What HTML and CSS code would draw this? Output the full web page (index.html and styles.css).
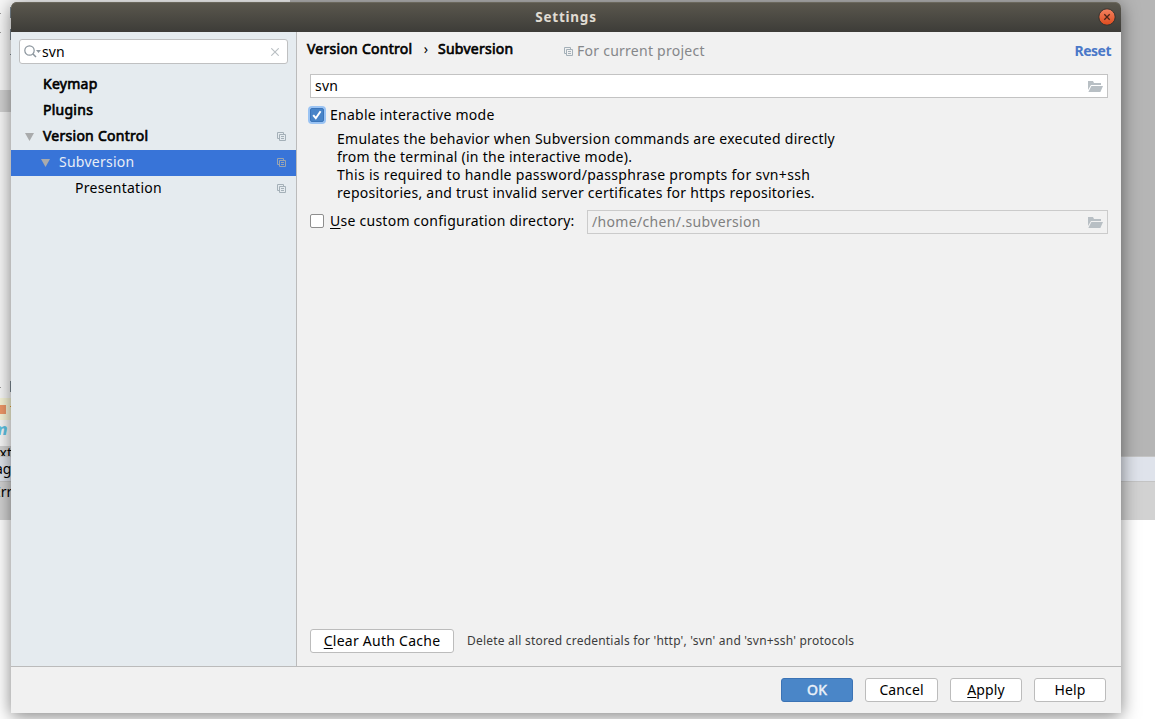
FILE: index.html
```
<!DOCTYPE html>
<html lang="en">
<head>
<meta charset="utf-8">
<title>Settings</title>
<link rel="stylesheet" href="styles.css">
</head>
<body>
<svg class="symbols" width="0" height="0">
  <symbol id="copy" viewBox="0 0 9 9"><path d="M2.5 6.5h-2v-6h6v2M2.5 2.5h6v6h-6zM4 4.5h3M4 6.5h3" fill="none" stroke="currentColor"/></symbol>
  <symbol id="folder" viewBox="0 0 15 11"><path d="M0 0h5l1 2h7v2H3L0 9z" fill="currentColor"/><path d="M3.4 5H15l-2.600 6H.4z" fill="currentColor"/></symbol>
  <symbol id="arrow" viewBox="0 0 9 8"><path d="M0 0h9L4.500 8z" fill="#a9abac"/></symbol>
</svg>
<div class="backdrop">
  <div class="editor"><div class="paper"></div><div class="gray"></div></div>
  <div class="statusbar"></div>
  <div class="lower"></div>
  <i class="band"></i><i class="highlight"></i><i class="marker"></i><i class="glint"></i>
  <i class="tick t1"></i><i class="tick t2"></i><i class="tick t3"></i><i class="tick t4"></i>
  <i class="dash d1"></i><i class="dash d2"></i><i class="dash d3"></i>
  <span class="frag f1">m</span><i class="tabs"></i><span class="frag f2">ext</span><span class="frag f3">ag</span><span class="frag f4">Err</span>
</div>
<div class="window">
  <header class="titlebar"><span class="title">Settings</span>
    <svg class="close" width="18" height="18" viewBox="0 0 18 18"><defs><linearGradient id="orange" x2="0" y2="1"><stop offset="0" stop-color="#f48361"/><stop offset="1" stop-color="#df4b1d"/></linearGradient></defs><circle cx="9" cy="9" r="8.200" fill="url(#orange)" stroke="#34332f" stroke-width="1"/><path d="M6.300 6.300l5.400 5.400M11.700 6.300l-5.400 5.400" stroke="#4b2519" stroke-width="1.300"/></svg>
  </header>
  <div class="main">
    <aside class="sidebar">
      <div class="search">
        <svg class="lens" width="17" height="14" viewBox="0 0 17 14"><circle cx="5.500" cy="5.500" r="4.700" fill="none" stroke="#8b959d" stroke-width="1.200"/><path d="M9 9l3 3" stroke="#8b959d" stroke-width="1.500"/><path d="M12 5h5l-2.500 3z" fill="#8b959d"/></svg>
        <span class="query">svn</span>
        <svg class="clear" width="8" height="8" viewBox="0 0 8 8"><path d="M.3.3l7.400 7.400M7.700.3L.3 7.700" stroke="#b9bfc3" stroke-width="1.100"/></svg>
      </div>
      <div class="row top"><b>Keymap</b></div>
      <div class="row top"><b>Plugins</b></div>
      <div class="row parent"><svg class="arrow"><use href="#arrow"/></svg><b>Version Control</b><svg class="copy"><use href="#copy"/></svg></div>
      <div class="row child selected"><svg class="arrow"><use href="#arrow"/></svg><span>Subversion</span><svg class="copy"><use href="#copy"/></svg></div>
      <div class="row leaf"><span>Presentation</span><svg class="copy"><use href="#copy"/></svg></div>
    </aside>
    <section class="content">
      <div class="crumbs"><b class="crumb-root">Version Control</b><span class="sep">›</span><b class="crumb-leaf">Subversion</b><span class="scope"><svg class="copy"><use href="#copy"/></svg><span>For current project</span></span><strong class="reset">Reset</strong></div>
      <div class="field"><span class="plain">svn</span><svg class="folder"><use href="#folder"/></svg></div>
      <div class="check interactive"><span class="box checked"><svg width="10" height="10" viewBox="0 0 10 10"><path d="M1.200 5.200l2.600 3L8.600 1.200" fill="none" stroke="#fff" stroke-width="2"/></svg></span><span>Enable interactive mode</span></div>
      <p class="hint">Emulates the behavior when Subversion commands are executed directly<br>from the terminal (in the interactive mode).<br><span class="wide">This is required to handle password/passphrase prompts for svn+ssh</span><br>repositories, and trust invalid server certificates for https repositories.</p>
      <div class="custom"><div class="check"><span class="box"></span><span><u>U</u>se custom configuration directory:</span></div><div class="field disabled"><span class="path">/home/chen/.subversion</span><svg class="folder"><use href="#folder"/></svg></div></div>
      <div class="auth"><button class="btn clear-auth"><u>C</u>lear Auth Cache</button><span class="note">Delete all stored credentials for 'http', 'svn' and 'svn+ssh' protocols</span></div>
    </section>
  </div>
  <footer class="footer"><button class="btn ok">OK</button><button class="btn cancel">Cancel</button><button class="btn apply"><u>A</u>pply</button><button class="btn help">Help</button></footer>
</div>
</body>
</html>
```
FILE: styles.css
```
* { box-sizing: border-box; }
body { margin: 0; width: 1155px; height: 719px; overflow: hidden; position: relative; background: #fff; font: 14px/18px "Noto Sans", sans-serif; letter-spacing: .255px; color: #000; padding: 2px 34px 6px 11px; }
.symbols { position: absolute; }
.backdrop { position: absolute; inset: 0; display: flex; flex-direction: column; overflow: hidden; letter-spacing: 0; }
.editor { height: 456px; display: flex; }
.paper { width: 290px; background: #f8f8f8; }
.gray { flex: 1; background: #b5b5b5; }
.statusbar { height: 26px; background: #dfe3eb; border-top: 1px solid #c4c4c4; border-bottom: 1px solid #c4c4c4; }
.lower { height: 38px; background: #d2d2d2; }
.backdrop i, .frag { position: absolute; }
.band { left: 0; top: 90px; width: 11px; height: 22px; background: #d2d2d2; }
.highlight { left: 0; top: 398px; width: 11px; height: 22px; background: #f8f6d8; }
.marker { left: 0; top: 405px; width: 6px; height: 9px; background: #ef9868; }
.glint { left: 10px; top: 406px; width: 1px; height: 1px; background: #e8a030; }
.tabs { left: 0; top: 446px; width: 11px; height: 11px; background: #d2d2d2; }
.tick { left: 10px; width: 1px; height: 11px; background: #7d8a94; }
.t1 { top: 7px; } .t2 { top: 29px; } .t3 { top: 54px; height: 1px !important; } .t4 { top: 381px; }
.dash { left: 0; width: 1px; height: 1px; background: #999; }
.d1 { top: 13px; } .d2 { top: 32px; } .d3 { top: 387px; }
.f1 { left: -8px; top: 421px; color: #5fc3e4; font: italic bold 15px/18px "DejaVu Sans", sans-serif; }
.f2 { left: -8px; top: 446px; line-height: 14px; height: 10px; overflow: hidden; }
.f3 { left: -5px; top: 462px; line-height: 14px; }
.f4 { left: -7px; top: 485px; line-height: 14px; }
.window { position: relative; width: 1110px; height: 711px; display: flex; flex-direction: column; border-radius: 6px 6px 0 0; background: #f1f1f1; box-shadow: 0 3px 18px rgba(0,0,0,.5); }
.titlebar { height: 30px; flex: none; border-radius: 6px 6px 0 0; background: linear-gradient(#5b584e, #3d3c38); box-shadow: inset 0 1px #6a675c; color: #e0dcd3; display: flex; align-items: center; justify-content: center; position: relative; }
.title { font: bold 13.5px/18px "Noto Sans", sans-serif; letter-spacing: .75px; }
.close { position: absolute; right: 5px; top: 6px; }
.main { flex: 1; display: flex; min-height: 0; }
.sidebar { width: 286px; background: #e5ebef; border-right: 1px solid #bbb; padding-top: 7px; }
.search { margin: 0 8px 8px; height: 25px; border: 1px solid #bfc0c1; border-radius: 3px; background: #fff; display: flex; align-items: center; padding: 0 8px 0 4px; letter-spacing: .1px; }
.query { margin-left: 1px; flex: 1; }
.row { height: 26px; display: flex; align-items: center; padding: 0 10px 2px 32px; }
.row .copy { margin: 1px 0 0 auto; }
.arrow { width: 9px; height: 8px; margin: 2px 9px 0 0; }
.parent { padding-left: 14px; }
.child { padding-left: 30px; }
.leaf { padding-left: 64px; }
.selected { background: #3874d8; color: #e9eef6; }
.copy { width: 9px; height: 9px; color: #a4b0b8; flex: none; }
.selected .copy { color: #9aa5b0; }
b { font-weight: normal; -webkit-text-stroke: .65px currentColor; }
.content { width: 824px; padding: 0 13px; display: flex; flex-direction: column; }
.crumbs { height: 42px; display: flex; margin: 0 -3px; padding-top: 8px; white-space: nowrap; }
.crumb-root { width: 107px; }
.crumb-leaf { width: 76px; }
.sep { width: 24px; text-align: center; }
.scope { display: flex; align-items: center; height: 18px; margin: 2px 0 0 50px; gap: 4px; color: #85878a; }
.scope .copy { margin-top: 1px; }
.reset { margin: 2px 0 0 auto; color: #4a78c8; letter-spacing: -.5px; }
.field { height: 24px; border: 1px solid #c3c3c3; background: #fff; display: flex; align-items: center; justify-content: space-between; padding: 0 4px; }
.folder { width: 15px; height: 11px; margin-top: 1px; color: #b8bfc4; }
.check { display: flex; align-items: center; gap: 6px; height: 18px; white-space: nowrap; }
.interactive { margin-top: 8px; }
.box { width: 14px; height: 14px; border: 1px solid #8e8e8e; border-radius: 2px; background: #fff; flex: none; }
.checked { background: #4884c8; border-color: #3b75ba; box-shadow: 0 0 0 2px #9ac3f3; display: flex; align-items: center; justify-content: center; }
.hint { margin: 6px 0 0 27px; white-space: nowrap; }
.wide { letter-spacing: .31px; }
.path { letter-spacing: .34px; }
.custom { display: flex; margin-top: 8px; }
.custom .check { width: 277px; height: 22px; }
.disabled { flex: 1; background: #f1f1f1; border-color: #cbcbcb; color: #808080; }
.auth { margin-top: auto; margin-bottom: 13px; display: flex; align-items: center; gap: 13px; }
.note { font-size: 12px; letter-spacing: .21px; color: #3c3c3c; white-space: nowrap; }
u { text-underline-offset: 2px; text-decoration-thickness: 1px; }
.btn { font: 14px/18px "Noto Sans", sans-serif; letter-spacing: .1px; color: #000; background: #fff; border: 1px solid #bcbcbc; border-radius: 3px; height: 24px; padding: 0 0 1px; width: 72px; }
.clear-auth { width: 144px; letter-spacing: .25px; }
.footer { height: 47px; border-top: 1px solid #bbb; display: flex; padding: 11px 15px 0; justify-content: flex-end; gap: 12px; }
.ok { background: #4a86c8; border-color: #3b73b5; color: #eaf1f9; -webkit-text-stroke: .5px #eaf1f9; }
.cancel { width: 73px; }
```
